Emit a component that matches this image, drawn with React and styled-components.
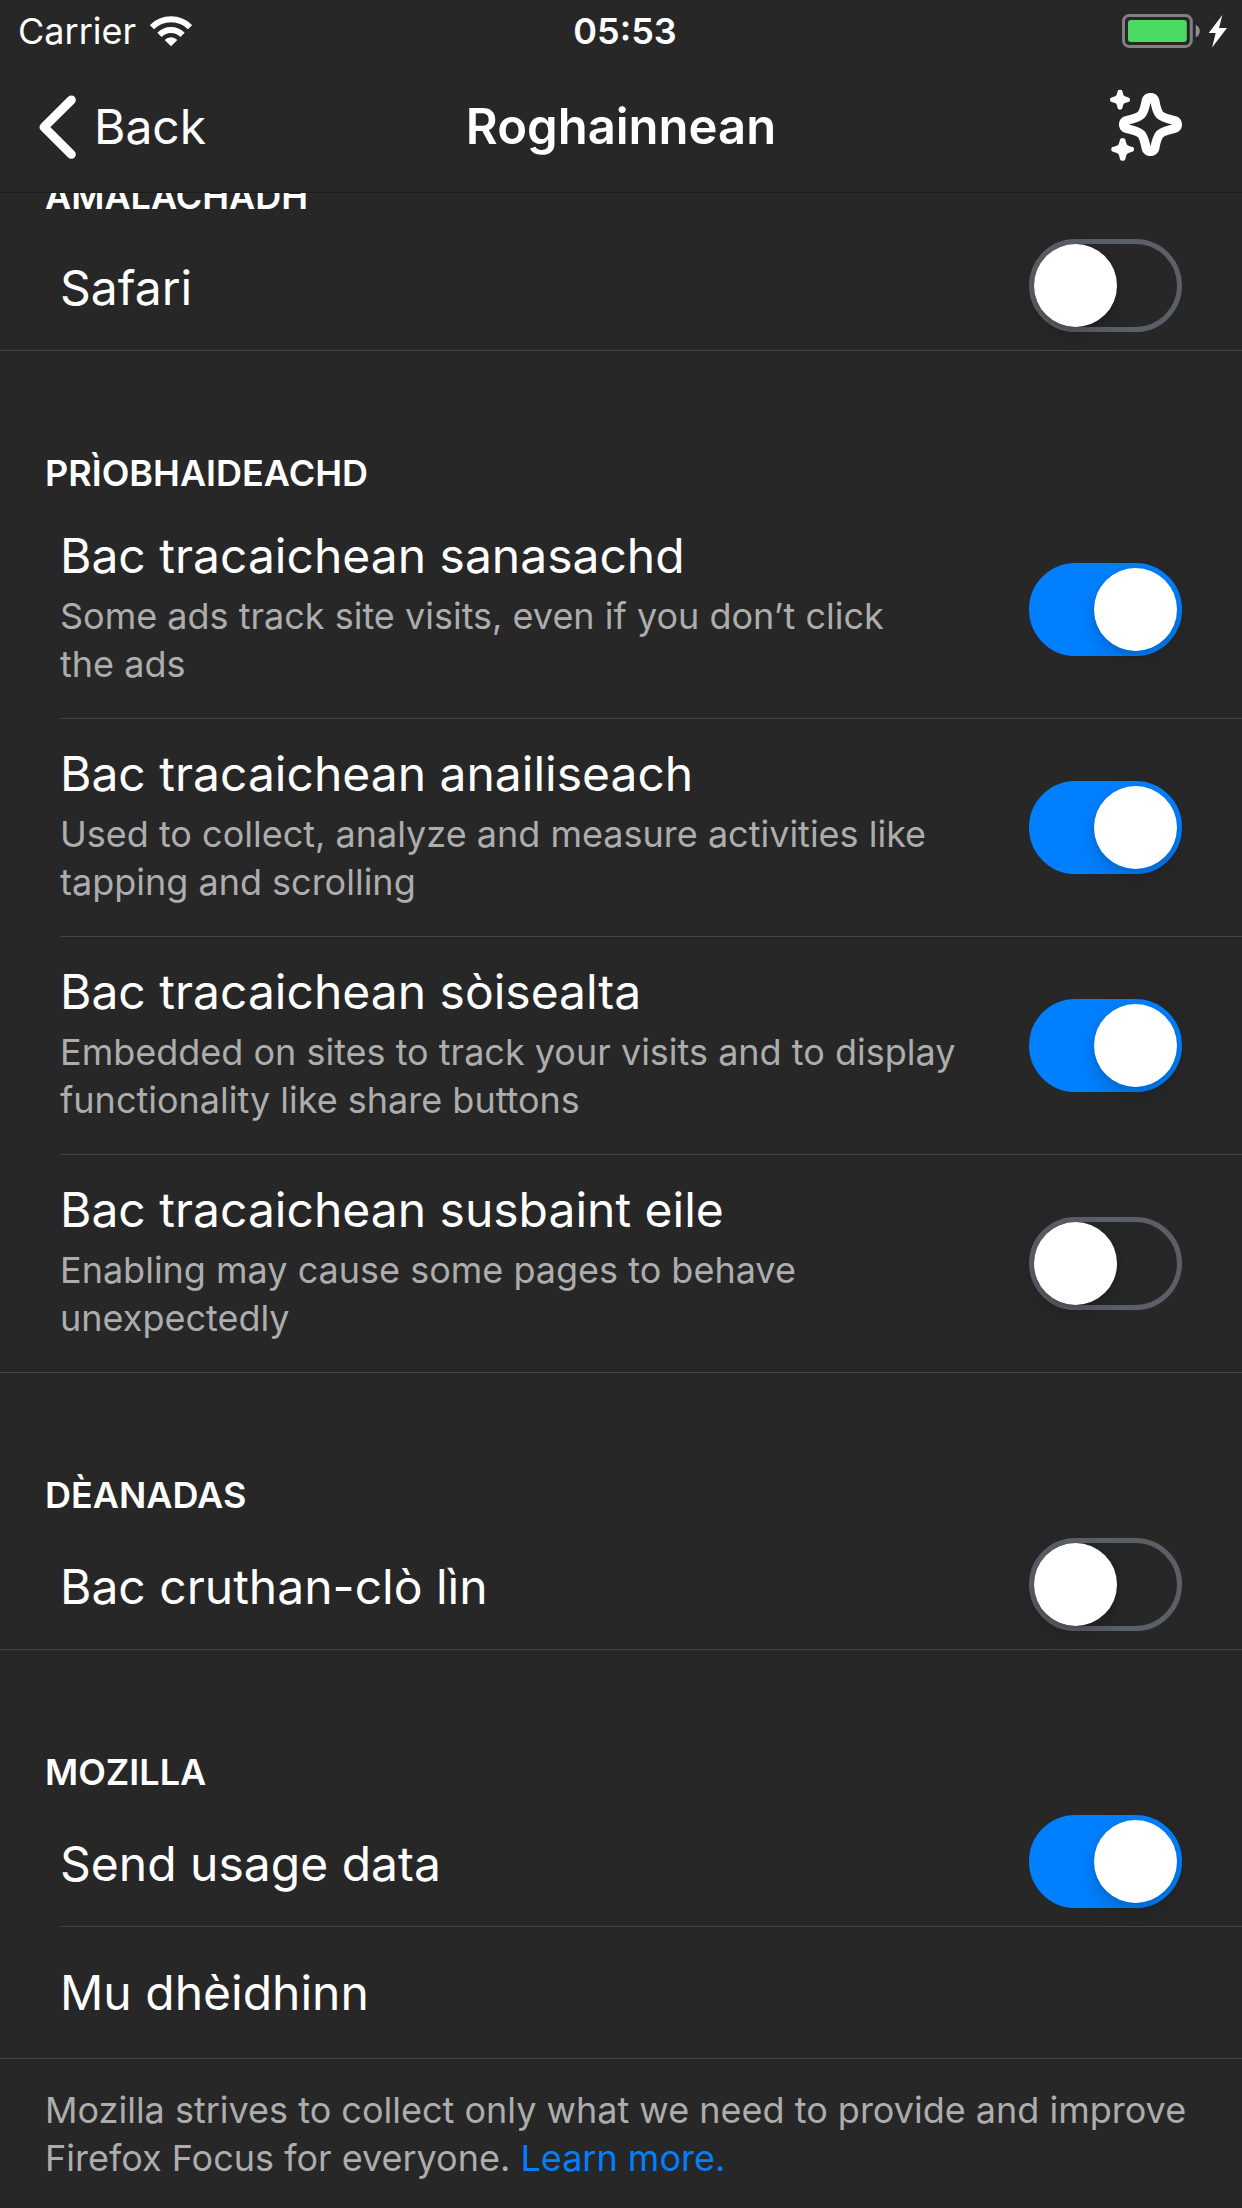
import React, { useState } from 'react';
import styled, { createGlobalStyle } from 'styled-components';

const GlobalStyle = createGlobalStyle`
  *, *::before, *::after { box-sizing: border-box; }
  html, body { margin: 0; background: #272727; }
  body {
    color: #fff;
    font-family: Inter, "Liberation Sans", sans-serif;
    font-size: 48px;
    line-height: 60px;
  }
`;

const Screen = styled.div`
  min-height: 100vh;
  display: flex;
  flex-direction: column;
`;

const Header = styled.header`
  border-bottom: 1px solid #1b1b1b;
`;

const ThreeColumns = styled.div`
  display: grid;
  grid-template-columns: 1fr auto 1fr;
  align-items: center;
`;

const StatusBar = styled(ThreeColumns)`
  height: 60px;
  padding: 2px 10px 0 18px;
  font-size: 36px;
  line-height: 48px;
`;

const StatusGroup = styled.div`
  display: flex;
  align-items: center;
  gap: 14px;
`;

const Clock = styled.time`
  font-weight: 600;
`;

const NavBar = styled(ThreeColumns)`
  height: 132px;
  padding: 2px 38px 0;
`;

const Title = styled.h1`
  margin: 0;
  font-size: 49px;
  font-weight: 600;
`;

const PlainButton = styled.button`
  display: flex;
  align-items: center;
  gap: 18px;
  padding: 0;
  border: 0;
  background: none;
  color: inherit;
  font: inherit;
  cursor: pointer;
`;

const Drawing = styled.svg`
  display: block;
  flex: none;
`;

const EndDrawing = styled(Drawing)`
  justify-self: end;
  margin-right: 5px;
`;

const EndButton = styled(PlainButton)`
  justify-self: end;
  padding: 0 22px 5px 0;
`;

const SectionTitle = styled.h2`
  display: flex;
  align-items: flex-end;
  height: ${(p) => (p.$scrolled ? 31 : 150)}px;
  margin: 0;
  padding: 0 45px 4px;
  overflow: hidden;
  font-size: 36px;
  font-weight: 600;
  line-height: 48px;
  text-transform: uppercase;
`;

const List = styled.ul`
  margin: 0;
  padding: 0;
  list-style: none;
  border-bottom: 1px solid #434445;
`;

const Item = styled.li`
  & + & > * {
    border-top: 1px solid #434445;
  }
`;

const SwitchRow = styled.label`
  display: flex;
  align-items: center;
  justify-content: space-between;
  gap: 24px;
  margin-left: 60px;
  padding: ${(p) => (p.$detailed ? '25px 60px 25px 0' : '15px 60px 18px 0')};
  cursor: pointer;
`;

const LinkRow = styled.a`
  display: block;
  margin-left: 60px;
  padding: 36px 60px 35px 0;
  color: inherit;
  text-decoration: none;
`;

const RowText = styled.span`
  display: flex;
  flex-direction: column;
  gap: 6px;
  min-width: 0;
  padding: ${(p) => (p.$detailed ? '0 0 5px' : '4px 0 0')};
`;

const Detail = styled.span`
  color: #adadad;
  font-size: 36px;
  line-height: 48px;
  white-space: pre-line;
`;

const Switch = styled.input`
  appearance: none;
  display: flex;
  flex: none;
  width: 153px;
  height: 93px;
  margin: 0;
  border: 5px solid #5b6067;
  border-radius: 47px;
  cursor: pointer;

  &::before {
    content: '';
    width: 83px;
    height: 83px;
    border-radius: 50%;
    background: #fff;
    box-shadow: 0 9px 24px rgba(0, 0, 0, 0.15), 0 3px 6px rgba(0, 0, 0, 0.1);
  }

  &:checked {
    justify-content: flex-end;
    border-color: #0080ff;
    background: #0080ff;
  }
`;

const Note = styled.p`
  margin: 0;
  padding: 27px 45px 0;
  color: #adadad;
  font-size: 36px;
  line-height: 48px;
`;

const NoteLink = styled.a`
  color: #0080ff;
  text-decoration: none;
`;

const WifiIcon = () => (
  <Drawing width="42" height="31" viewBox="450 44 126 93" aria-hidden="true">
    <g fill="none" stroke="#fff" strokeWidth="18">
      <path d="M455.7 77.7a81 81 0 0 1 114.6 0" />
      <path d="M478.4 100.4a49 49 0 0 1 69.2 0" />
    </g>
    <path fill="#fff" d="M513 135 493.9 115.9a27 27 0 0 1 38.2 0Z" />
  </Drawing>
);

const BatteryIcon = () => (
  <EndDrawing width="105" height="34" viewBox="120 39 316 102" role="img" aria-label="Battery charging">
    <rect x="124.500" y="43.500" width="204" height="93" rx="17" fill="none" stroke="#808080" strokeWidth="9" />
    <rect x="138" y="57" width="177" height="66" rx="9" fill="#4cd964" />
    <path fill="#929292" d="M342 71c8 4 12 11 12 19s-4 15-12 19Z" />
    <path fill="#fff" d="M422 42 381 96h21l-11 44 45-59h-24Z" />
  </EndDrawing>
);

const ChevronIcon = () => (
  <Drawing width="38" height="64" viewBox="112 283 114 192" aria-hidden="true">
    <path d="M212 298 130 379.500 212 461" fill="none" stroke="#fff" strokeWidth="27" strokeLinecap="round" strokeLinejoin="round" />
  </Drawing>
);

const smallStar =
  'M0-30Q6-30 7-26C9-17 10-13 13-11C16-9 22-8 27-6Q30-5 30 0Q30 5 27 6C22 8 16 9 13 11C10 13 9 17 7 26Q6 30 0 30Q-6 30-7 26C-9 17-10 13-13 11C-16 9-22 8-27 6Q-30 5-30 0Q-30-5-27-6C-22-8-16-9-13-11C-10-13-9-17-7-26Q-6-30 0-30Z';

const SparkleIcon = () => (
  <Drawing width="72" height="72" viewBox="84 264 216 216" aria-hidden="true">
    <g fill="#fff">
      <path
        fillRule="evenodd"
        d="M205.500 276C219 276 229 284 232 297C236 318 240 329 244 333C249 337 262 341 279 345C292 348 300 357 300 370.500C300 384 292 393 279 396C262 400 249 404 244 408C240 412 236 423 232 444C229 457 219 465 205.500 465C192 465 182 457 179 444C175 423 171 412 167 408C162 404 149 400 132 396C119 393 111 384 111 370.500C111 357 119 348 132 345C149 341 162 337 167 333C171 329 175 318 179 297C182 284 192 276 205.500 276Z
        M205.500 305C210 325 214 339 223 350C234 360 250 366 271 370.500C250 375 234 381 223 391C214 402 210 416 205.500 436C201 416 197 402 188 391C177 381 161 375 140 370.500C161 366 177 360 188 350C197 339 201 325 205.500 305Z"
      />
      <path transform="translate(114 296)" d={smallStar} />
      <path transform="translate(122 445) scale(1.14)" d={smallStar} />
    </g>
  </Drawing>
);

const sections = [
  {
    title: 'Amalachadh',
    scrolled: true,
    rows: [{ id: 'safari', label: 'Safari', on: false }],
  },
  {
    title: 'Prìobhaideachd',
    rows: [
      {
        id: 'ads',
        label: 'Bac tracaichean sanasachd',
        detail: 'Some ads track site visits, even if you don’t click\nthe ads',
        on: true,
      },
      {
        id: 'analytics',
        label: 'Bac tracaichean anailiseach',
        detail: 'Used to collect, analyze and measure activities like\ntapping and scrolling',
        on: true,
      },
      {
        id: 'social',
        label: 'Bac tracaichean sòisealta',
        detail: 'Embedded on sites to track your visits and to display\nfunctionality like share buttons',
        on: true,
      },
      {
        id: 'other',
        label: 'Bac tracaichean susbaint eile',
        detail: 'Enabling may cause some pages to behave\nunexpectedly',
        on: false,
      },
    ],
  },
  {
    title: 'Dèanadas',
    rows: [{ id: 'fonts', label: 'Bac cruthan-clò lìn', on: false }],
  },
  {
    title: 'Mozilla',
    rows: [
      { id: 'usage', label: 'Send usage data', on: true },
      { id: 'about', label: 'Mu dhèidhinn', href: '#about' },
    ],
  },
];

function SettingRow({ id, label, detail, on }) {
  const [checked, setChecked] = useState(on);
  const detailed = Boolean(detail);
  return (
    <SwitchRow htmlFor={id} $detailed={detailed}>
      <RowText $detailed={detailed}>
        <span>{label}</span>
        {detail && <Detail>{detail}</Detail>}
      </RowText>
      <Switch
        id={id}
        type="checkbox"
        role="switch"
        checked={checked}
        onChange={(e) => setChecked(e.target.checked)}
      />
    </SwitchRow>
  );
}

export default function App() {
  return (
    <Screen>
      <GlobalStyle />
      <Header>
        <StatusBar>
          <StatusGroup>
            <span>Carrier</span>
            <WifiIcon />
          </StatusGroup>
          <Clock>05:53</Clock>
          <BatteryIcon />
        </StatusBar>
        <NavBar>
          <PlainButton type="button">
            <ChevronIcon />
            Back
          </PlainButton>
          <Title>Roghainnean</Title>
          <EndButton type="button" aria-label="What’s new">
            <SparkleIcon />
          </EndButton>
        </NavBar>
      </Header>
      <main>
        {sections.map((section) => (
          <section key={section.title}>
            <SectionTitle $scrolled={section.scrolled}>{section.title}</SectionTitle>
            <List>
              {section.rows.map((row) => (
                <Item key={row.id}>
                  {row.href ? <LinkRow href={row.href}>{row.label}</LinkRow> : <SettingRow {...row} />}
                </Item>
              ))}
            </List>
          </section>
        ))}
        <Note>
          Mozilla strives to collect only what we need to provide and improve Firefox Focus for everyone.{' '}
          <NoteLink href="#learn-more">Learn more.</NoteLink>
        </Note>
      </main>
    </Screen>
  );
}
